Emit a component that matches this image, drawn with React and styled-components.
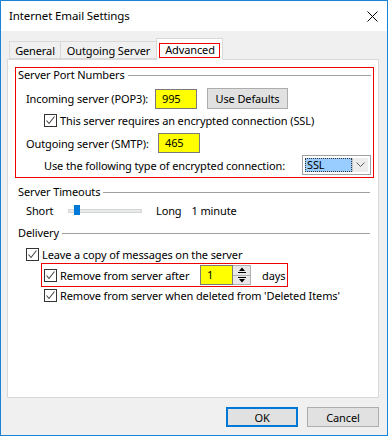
import React from 'react';
import styled, { createGlobalStyle } from 'styled-components';

const GlobalStyle = createGlobalStyle`
    html, body {
        margin: 0;
        padding: 0;
        background: #ffffff;
    }
    body {
        font-family: "Noto Sans", "Open Sans", sans-serif;
        font-size: 11px;
        letter-spacing: -0.12px;
        color: #000000;
    }
    * {
        box-sizing: border-box;
    }
`

const Window = styled.div`
    width: 388px;
    height: 436px;
    border: 1px solid #1883d7;
    display: flex;
    flex-direction: column;
    background: #f0f0f0;
`

const TitleBar = styled.div`
    height: 30px;
    background: #ffffff;
    display: flex;
    align-items: center;
    justify-content: space-between;
    padding: 0 9px 0 8px;
`

const Title = styled.span`
    font-size: 11.5px;
    line-height: 16px;
`

const Body = styled.div`
    flex: 1;
    display: flex;
    flex-direction: column;
    padding: 7px 8px 0 6px;
`

const TabStrip = styled.div`
    display: flex;
    align-items: flex-end;
    height: 21px;
    padding-left: 2px;
    position: relative;
    z-index: 1;
`

const Tab = styled.div`
    width: ${p => p.$w}px;
    height: ${p => (p.$active ? '22px' : '18px')};
    margin-bottom: ${p => (p.$active ? '-1px' : '0')};
    margin-left: ${p => (p.$first ? '0' : '-1px')};
    padding-top: ${p => (p.$active ? '3px' : '1px')};
    border: 1px solid #d9d9d9;
    border-bottom: ${p => (p.$active ? 'none' : '1px solid #d9d9d9')};
    background: ${p => (p.$active ? '#ffffff' : '#f0f0f0')};
    line-height: 15px;
    text-align: center;
    white-space: nowrap;
`

const Marked = styled.span`
    display: inline-block;
    border: 1px solid #ee0000;
    padding: 0 4px 0 5px;
    line-height: 12px;
    height: 15px;
`

const Panel = styled.div`
    height: 339px;
    background: #ffffff;
    border: 1px solid #d9d9d9;
    display: flex;
    flex-direction: column;
`

const RedBox = styled.div`
    border: 1px solid #ee0000;
    margin: ${p => p.$margin};
    padding: ${p => p.$padding || '0'};
    display: flex;
    flex-direction: column;
    align-self: ${p => (p.$fit ? 'flex-start' : 'stretch')};
`

const GroupHeader = styled.div`
    display: flex;
    align-items: center;
    height: 13px;
    gap: 3px;
    margin: ${p => p.$margin || '0'};
    span {
        line-height: 13px;
        white-space: nowrap;
    }
    &::after {
        content: '';
        flex: 1;
        height: 1px;
        background: #a0a0a0;
        margin-top: 1px;
    }
`

const Row = styled.div`
    display: flex;
    align-items: center;
    height: ${p => p.$h || 13}px;
    margin-top: ${p => p.$top || 0}px;
    padding-left: ${p => p.$indent || 0}px;
    white-space: nowrap;
`

const Label = styled.span`
    width: ${p => (p.$w ? `${p.$w}px` : 'auto')};
    margin-left: ${p => p.$ml || 0}px;
    flex-shrink: 0;
    line-height: 15px;
`

const YellowInput = styled.div`
    width: ${p => p.$w}px;
    height: 20px;
    background: #ffff00;
    border: 1px solid #7a7a7a;
    padding-left: ${p => p.$pad || 6}px;
    line-height: 18px;
`

const Button = styled.div`
    width: ${p => p.$w}px;
    height: ${p => p.$h || 21}px;
    margin-left: ${p => p.$ml || 0}px;
    background: #e1e1e1;
    border: ${p => (p.$default ? '2px solid #0078d7' : '1px solid #adadad')};
    display: flex;
    align-items: center;
    justify-content: center;
    line-height: 15px;
`

const Box = styled.span`
    width: 13px;
    height: 13px;
    border: 1px solid #333333;
    background: #ffffff;
    display: inline-flex;
    align-items: center;
    justify-content: center;
    flex-shrink: 0;
    margin-right: 3px;
`

const Select = styled.div`
    width: 69px;
    height: 20px;
    border: 1px solid #a0a0a0;
    display: flex;
    padding: 2px;
    background: #ffffff;
`

const Selected = styled.div`
    flex: 1;
    background: #99ccff;
    outline: 1px dotted #333333;
    outline-offset: -1px;
    line-height: 14px;
    padding-left: 2px;
`

const DropButton = styled.div`
    width: 16px;
    background: #ececec;
    border-left: 1px solid #c8c8c8;
    display: flex;
    align-items: center;
    justify-content: center;
`

const Slider = styled.div`
    width: 74px;
    height: 4px;
    background: #e7eaea;
    border: 1px solid #d6d6d6;
    position: relative;
    flex-shrink: 0;
`

const Thumb = styled.div`
    position: absolute;
    left: 5px;
    top: -5px;
    width: 6px;
    height: 10px;
    background: #007ad9;
`

const Spin = styled.div`
    display: flex;
    height: 20px;
    margin-left: ${p => p.$ml || 0}px;
`

const SpinButtons = styled.div`
    width: 18px;
    display: flex;
    flex-direction: column;
    border: 1px solid #b0b0b0;
    border-left: none;
    background: #e8e8e8;
`

const SpinButton = styled.div`
    flex: 1;
    display: flex;
    align-items: center;
    justify-content: center;
    border-top: ${p => (p.$down ? '1px solid #b0b0b0' : 'none')};
`

const Footer = styled.div`
    display: flex;
    justify-content: flex-end;
    gap: 9px;
    margin-top: 9px;
`

const Check = () => (
    <Box>
        <svg width="11" height="11" viewBox="0 0 11 11">
            <polyline points="1.5,5.5 4,8.5 9.5,1.5" fill="none" stroke="#444" strokeWidth="1.1" />
        </svg>
    </Box>
)

const Chevron = () => (
    <svg width="9" height="6" viewBox="0 0 9 6">
        <polyline points="0.5,0.5 4.5,4.5 8.5,0.5" fill="none" stroke="#606060" strokeWidth="1" />
    </svg>
)

const Arrow = ({ down }) => (
    <svg width="8" height="6" viewBox="0 0 8 6">
        {down ? (
            <>
                <rect x="0" y="0" width="8" height="1" fill="#000" />
                <polygon points="1,2 7,2 4,5.5" fill="#000" />
            </>
        ) : (
            <>
                <polygon points="4,0.5 7,4 1,4" fill="#000" />
                <rect x="0" y="5" width="8" height="1" fill="#000" />
            </>
        )}
    </svg>
)

const App = () => {
    return (
        <>
            <GlobalStyle />
            <Window>
                <TitleBar>
                    <Title>Internet Email Settings</Title>
                    <svg width="11" height="11" viewBox="0 0 11 11">
                        <path d="M0.5 0.5 L10.5 10.5 M10.5 0.5 L0.5 10.5" stroke="#000" strokeWidth="1" />
                    </svg>
                </TitleBar>
                <Body>
                    <TabStrip>
                        <Tab $first $w={52}>General</Tab>
                        <Tab $w={97}>Outgoing Server</Tab>
                        <Tab $active $w={67}><Marked>Advanced</Marked></Tab>
                    </TabStrip>
                    <Panel>
                        <RedBox $margin="7px 4px 0 7px" $padding="0 2px 2px 2px">
                            <GroupHeader><span>Server Port Numbers</span></GroupHeader>
                            <Row $h={21} $top={7} $indent={8}>
                                <Label $w={129}>Incoming server (POP3):</Label>
                                <YellowInput $w={42}>995</YellowInput>
                                <Button $w={81} $ml={10}>Use Defaults</Button>
                            </Row>
                            <Row $top={5} $indent={26}>
                                <Check />
                                <Label>This server requires an encrypted connection (SSL)</Label>
                            </Row>
                            <Row $h={20} $top={6} $indent={8}>
                                <Label $w={132}>Outgoing server (SMTP):</Label>
                                <YellowInput $w={42}>465</YellowInput>
                            </Row>
                            <Row $h={20} $top={2} $indent={26}>
                                <Label $w={258}>Use the following type of encrypted connection:</Label>
                                <Select>
                                    <Selected>SSL</Selected>
                                    <DropButton><Chevron /></DropButton>
                                </Select>
                            </Row>
                        </RedBox>

                        <GroupHeader $margin="7px 8px 0 10px"><span>Server Timeouts</span></GroupHeader>
                        <Row $top={6} $indent={18}>
                            <Label $w={42}>Short</Label>
                            <Slider><Thumb /></Slider>
                            <Label $ml={14}>Long</Label>
                            <Label $ml={10}>1 minute</Label>
                        </Row>

                        <GroupHeader $margin="9px 8px 0 10px"><span>Delivery</span></GroupHeader>
                        <Row $top={9} $indent={18}>
                            <Check />
                            <Label>Leave a copy of messages on the server</Label>
                        </Row>
                        <RedBox $fit $margin="2px 0 0 33px" $padding="0 0 0 2px">
                            <Row $h={22}>
                                <Check />
                                <Label $w={140}>Remove from server after</Label>
                                <Spin>
                                    <YellowInput $w={33} $pad={6}>1</YellowInput>
                                    <SpinButtons>
                                        <SpinButton><Arrow /></SpinButton>
                                        <SpinButton $down><Arrow down /></SpinButton>
                                    </SpinButtons>
                                </Spin>
                                <Label $w={25} $ml={11}>days</Label>
                            </Row>
                        </RedBox>
                        <Row $top={2} $indent={36}>
                            <Check />
                            <Label>Remove from server when deleted from 'Deleted Items'</Label>
                        </Row>
                    </Panel>
                    <Footer>
                        <Button $w={72} $h={20} $default>OK</Button>
                        <Button $w={72} $h={20}>Cancel</Button>
                    </Footer>
                </Body>
            </Window>
        </>
    )
}

export default App
